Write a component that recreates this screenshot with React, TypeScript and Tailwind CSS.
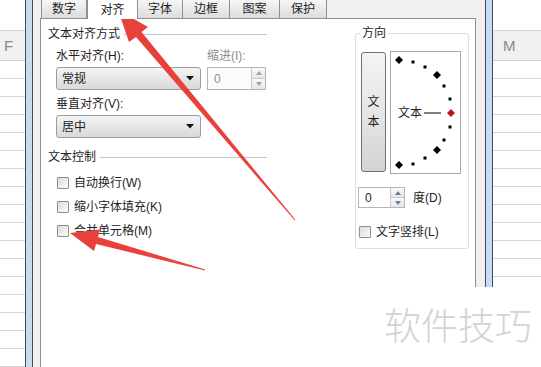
import React from "react";

const Sheet = ({ letter, pad }: { letter: string; pad: string }) => (
  <div className="flex flex-col bg-white">
    <div className="h-[31px] shrink-0 border-b border-[#d6d6d6]" />
    <div
      className={`flex h-[30px] shrink-0 items-center border-b border-[#cfcfcf] bg-[#f0f0f0] text-[15px] text-[#8a8a8a] ${pad}`}
    >
      {letter}
    </div>
    {Array.from({ length: 17 }).map((_, i) => (
      <div key={i} className="h-[18px] shrink-0 border-b border-[#d6d6d6]" />
    ))}
  </div>
);

const Tab = ({ label, w, active }: { label: string; w: string; active?: boolean }) =>
  active ? (
    <div
      className={`relative z-10 -mb-px flex h-[19px] ${w} items-center justify-center border-x border-[#8e8f8f] bg-white`}
    >
      {label}
    </div>
  ) : (
    <div
      className={`flex h-[18px] ${w} items-center justify-center border-r border-[#8e8f8f] bg-gradient-to-b from-[#f6f6f6] to-[#dcdcdc]`}
    >
      {label}
    </div>
  );

const Legend = ({ text }: { text: string }) => (
  <div className="flex h-[14px] items-center gap-[4px]">
    <span>{text}</span>
    <div className="h-px flex-1 bg-[#c4c4c4]" />
  </div>
);

const Check = ({ label }: { label: string }) => (
  <div className="flex h-[14px] items-center gap-[5px]">
    <div className="h-[12px] w-[12px] rounded-[1px] border border-[#8f8f8f] bg-gradient-to-br from-[#dcdcdc] to-[#fbfbfb]" />
    <span>{label}</span>
  </div>
);

const Caret = () => (
  <svg width="8" height="5" viewBox="0 0 8 5">
    <path d="M0 0 L8 0 L4 4.5 Z" fill="#111" />
  </svg>
);

const Select = ({ value, h }: { value: string; h: string }) => (
  <div
    className={`flex ${h} w-[145px] items-center justify-between rounded-[3px] border border-[#9c9c9c] bg-gradient-to-b from-[#f4f4f4] to-[#d9d9d9] pl-[5px] pr-[6px]`}
  >
    <span>{value}</span>
    <Caret />
  </div>
);

const SpinButtons = ({ color }: { color: string }) => (
  <div className="flex h-full w-[14px] flex-col border-l border-[#c8c8c8]">
    <div className="flex flex-1 items-center justify-center border-b border-[#c8c8c8] bg-gradient-to-b from-[#fafafa] to-[#e6e6e6]">
      <svg width="6" height="4" viewBox="0 0 6 4">
        <path d="M0 4 L6 4 L3 0 Z" fill={color} />
      </svg>
    </div>
    <div className="flex flex-1 items-center justify-center bg-gradient-to-b from-[#fafafa] to-[#e6e6e6]">
      <svg width="6" height="4" viewBox="0 0 6 4">
        <path d="M0 0 L6 0 L3 4 Z" fill={color} />
      </svg>
    </div>
  </div>
);

// orientation dial marks, relative to the dial box
const marks: [number, number, boolean][] = [
  [8, 8, true],
  [22, 10, false],
  [34, 15, false],
  [46, 23, true],
  [53, 34, false],
  [59, 47, false],
  [59, 75, false],
  [53, 88, false],
  [46, 98, true],
  [34, 106, false],
  [22, 112, false],
  [8, 113, true],
];

const Dial = () => (
  <div className="relative h-[123px] w-[71px] border border-[#a8a8a8] bg-white">
    <svg className="absolute inset-0" width="71" height="123" viewBox="0 0 71 123">
      {marks.map(([x, y, big], i) =>
        big ? (
          <path key={i} d={`M${x} ${y - 4} L${x + 4} ${y} L${x} ${y + 4} L${x - 4} ${y} Z`} fill="#000" />
        ) : (
          <rect key={i} x={x - 1.5} y={y - 1.5} width="3" height="3" fill="#000" />
        )
      )}
      <line x1="33" y1="61" x2="50" y2="61" stroke="#000" strokeWidth="1" />
      <path d="M60 57 L64 61 L60 65 L56 61 Z" fill="#c0141c" />
    </svg>
    <span className="absolute left-[7px] top-[53px] leading-[16px]">文本</span>
  </div>
);

const Arrow = ({ points }: { points: string }) => <polygon points={points} fill="#e8403a" />;

export default function App() {
  return (
    <div className="relative flex h-[367px] w-[541px] overflow-hidden bg-white font-['Liberation_Sans','Noto_Sans_CJK_SC',sans-serif] text-[12px] leading-[14px] text-[#1e1e1e]">
      <div className="w-[25px] shrink-0 overflow-hidden">
        <Sheet letter="F" pad="pl-[4px]" />
      </div>
      <div className="w-[8px] shrink-0 border-x border-[#3d4b5c] bg-[#c6dcf0]" />

      <div className="flex w-[442px] shrink-0 flex-col bg-[#f0f0f0] pl-[7px]">
        <div className="flex h-[18px] shrink-0 items-end pl-[1px]">
          <div className="h-full border-l border-[#8e8f8f]" />
          <Tab label="数字" w="w-[45px]" />
          <Tab label="对齐" w="w-[51px]" active />
          <Tab label="字体" w="w-[45px]" />
          <Tab label="边框" w="w-[47px]" />
          <Tab label="图案" w="w-[50px]" />
          <Tab label="保护" w="w-[47px]" />
        </div>

        <div className="flex flex-1 border-l border-t border-[#8e8f8f] bg-white">
          <div className="ml-[7px] mt-[8px] flex w-[219px] flex-col">
            <Legend text="文本对齐方式" />
            <div className="mt-[8px] flex pl-[8px]">
              <span className="w-[151px]">水平对齐(H):</span>
              <span className="text-[#8d8d8d]">缩进(I):</span>
            </div>
            <div className="mt-[4px] flex gap-[6px] pl-[8px]">
              <Select value="常规" h="h-[23px]" />
              <div className="flex h-[23px] w-[59px] items-center justify-between border border-[#b5b5b5] bg-[#fbfbfb] pl-[6px] text-[#8d8d8d]">
                <span>0</span>
                <SpinButtons color="#a0a0a0" />
              </div>
            </div>
            <div className="mt-[7px] pl-[8px]">垂直对齐(V):</div>
            <div className="mt-[4px] pl-[8px]">
              <Select value="居中" h="h-[23px]" />
            </div>
            <div className="mt-[12px]">
              <Legend text="文本控制" />
            </div>
            <div className="mt-[12px] flex flex-col gap-[10px] pl-[9px]">
              <Check label="自动换行(W)" />
              <Check label="缩小字体填充(K)" />
              <Check label="合并单元格(M)" />
            </div>
          </div>

          <div className="relative ml-auto mr-[6px] mt-[14px] h-[216px] w-[114px] rounded-[3px] border border-[#d5dfe5] pl-[5px] pt-[17px]">
            <span className="absolute left-[4px] top-[-8px] bg-white px-[2px]">方向</span>
            <div className="flex items-start gap-[4px]">
              <div className="mt-[1px] flex h-[120px] w-[25px] flex-col items-center justify-center rounded-[3px] border border-[#707070] bg-gradient-to-b from-[#f3f3f3] via-[#e6e6e6] to-[#d3d3d3] leading-[20px]">
                <span>文</span>
                <span>本</span>
              </div>
              <Dial />
            </div>
            <div className="-ml-[3px] mt-[13px] flex items-center gap-[8px]">
              <div className="flex h-[21px] w-[47px] items-center justify-between border border-[#b5b5b5] bg-white pl-[6px]">
                <span>0</span>
                <SpinButtons color="#6a7f9a" />
              </div>
              <span>度(D)</span>
            </div>
            <div className="-ml-[2px] mt-[17px]">
              <Check label="文字竖排(L)" />
            </div>
          </div>
        </div>
      </div>

      <div className="flex h-[287px] w-[66px] shrink-0">
        <div className="flex w-[10px] shrink-0 flex-col bg-[#f0f0f0]">
          <div className="h-[18px] shrink-0" />
          <div className="flex-1 border-l border-[#8e8f8f]" />
        </div>
        <div className="w-[8px] shrink-0 border-x border-[#3d4b5c] bg-[#c6dcf0]" />
        <div className="flex-1 overflow-hidden">
          <Sheet letter="M" pad="pl-[10px]" />
        </div>
      </div>

      <svg className="pointer-events-none absolute inset-0" width="541" height="367" viewBox="0 0 541 367">
        <Arrow points="118,10 148,27 141.5,32 295.4,219.7 294.6,220.3 136,37 129,42" />
        <Arrow points="70,233 100,229.5 98,237 205.1,269.5 204.9,270.5 96,244 94,251" />
      </svg>

      <div className="pointer-events-none absolute left-[384px] top-[304px] font-['Noto_Sans_CJK_SC',sans-serif] text-[37px] font-light leading-[40px] text-[#d3d3d3]">
        软件技巧
      </div>
    </div>
  );
}
